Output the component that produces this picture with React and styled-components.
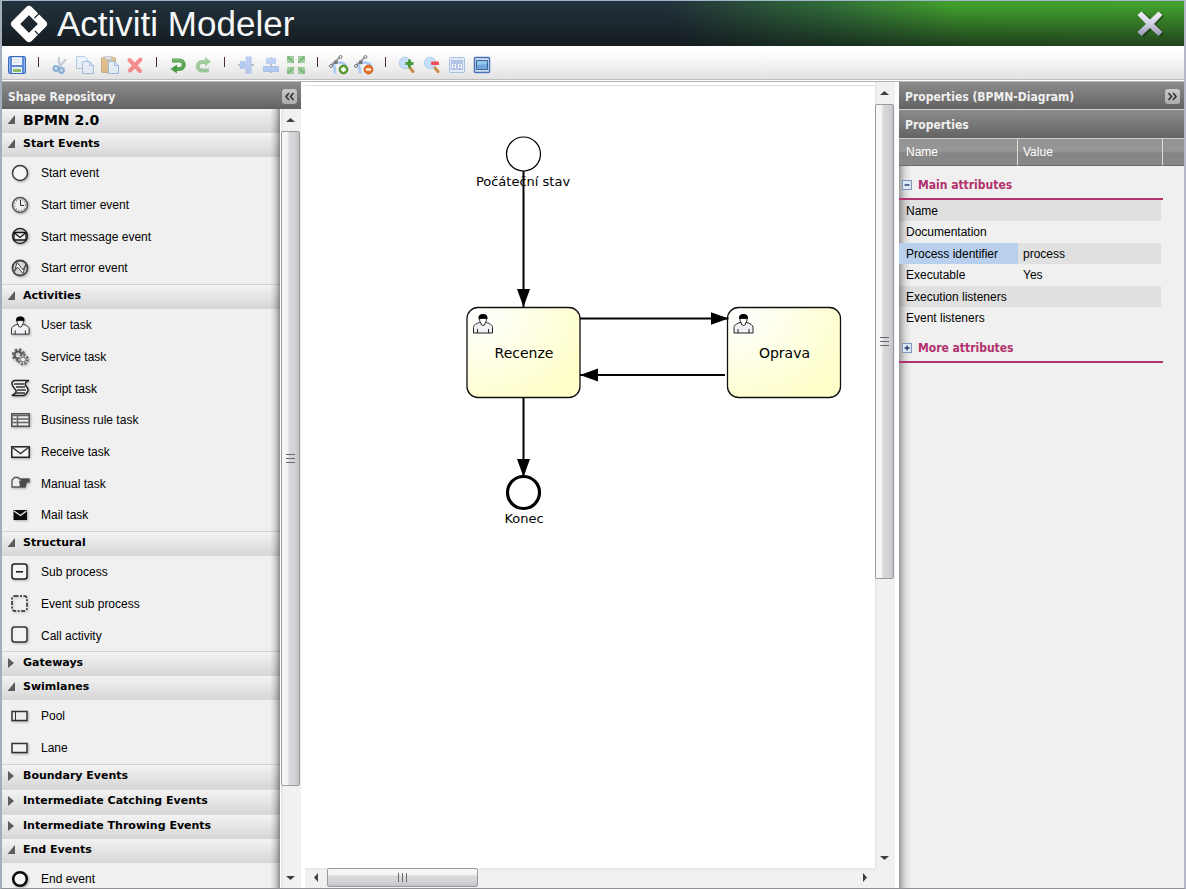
import React, { useState } from "react";
import styled, { createGlobalStyle, css } from "styled-components";

const sans = '"Liberation Sans", Arial, sans-serif';
const wide = '"DejaVu Sans", Verdana, sans-serif';
const condensed = '"DejaVu Sans Condensed", Tahoma, sans-serif';

const GlobalStyle = createGlobalStyle`
  *, *::before, *::after { box-sizing: border-box; }
  body { margin: 0; background: #fff; font-family: ${sans}; font-size: 12px; color: #000; }
  button { margin: 0; padding: 0; border: 0; background: none; font: inherit; color: inherit; text-align: left; cursor: pointer; }
  h1, h2, ul { margin: 0; padding: 0; }
  ul { list-style: none; }
  svg { display: block; flex: none; }
`;

const Window = styled.div`
  display: flex;
  flex-direction: column;
  height: 100vh;
  border: 1px solid #8f9194;
  border-top-color: #9fb6cb;
  border-left: 2px solid #a4adb8;
  border-right: 2px solid #b4b8c8;
  overflow: hidden;
`;

const Header = styled.header`
  display: flex;
  align-items: center;
  justify-content: space-between;
  flex: none;
  height: 45px;
  padding: 0 19px 0 7px;
  background:
    linear-gradient(rgba(14, 18, 20, 0) 10%, rgba(14, 18, 20, 0.66)),
    radial-gradient(ellipse 42% 640% at 98% -60%, #43a02d 0%, #419c2d 44%, #2f6a38 68%, #22303a 100%);
`;

const Brand = styled.div`
  display: flex;
  align-items: center;
  gap: 8px;
`;

const Title = styled.h1`
  font: 400 35px/45px ${sans};
  color: #f4f6f7;
  white-space: nowrap;
`;

const Toolbar = styled.nav`
  display: flex;
  align-items: center;
  flex: none;
  height: 36px;
  padding: 4px 0 2px 2px;
  background: linear-gradient(#fff 6px, #e2e2e2 33px, #bdbdbd 33px, #bdbdbd 34px, #fff 34px, #fff 35px, #b4b4b4 35px);
`;

const ToolButton = styled.button`
  display: flex;
  align-items: center;
  justify-content: center;
  width: 25px;
  height: 25px;
  opacity: ${(p) => (p.$faded ? 0.5 : 1)};
`;

const Separator = styled.span`
  width: 18px;
  height: 16px;
  background: linear-gradient(#4a2b3c, #4a2b3c) center top / 1px 10px no-repeat;
`;

const Workspace = styled.div`
  display: flex;
  flex: 1;
  min-height: 0;
`;

const Sidebar = styled.aside`
  display: flex;
  flex-direction: column;
  flex: none;
  width: 299px;
`;

const PanelBar = styled.header`
  display: flex;
  align-items: center;
  justify-content: space-between;
  flex: none;
  height: ${(p) => (p.$ruled ? 28 : 27)}px;
  padding: 2px 4px 0 6px;
  border-bottom: ${(p) => (p.$ruled ? "1px solid #d0d0d0" : "0")};
  background: linear-gradient(#8c8c8c, #636363);

  & + & { height: 29px; }
`;

const PanelTitle = styled.h2`
  font: 700 12px/16px ${condensed};
  color: #f0f0f0;
  white-space: nowrap;
`;

const CollapseButton = styled.button`
  display: flex;
  align-items: center;
  justify-content: center;
  width: 15px;
  height: 15px;
  border-radius: 3px;
  background: linear-gradient(#c9c9c9, #adadad);
`;

const Repository = styled.div`
  display: flex;
  flex: 1;
  min-height: 0;
`;

const Tree = styled.div`
  position: relative;
  flex: 1;
  overflow: hidden;
  background: #f0f0f0;
  margin-right: 1px;

  &::after {
    content: "";
    position: absolute;
    inset: 0 0 0 auto;
    width: 10px;
    background: linear-gradient(90deg, rgba(0, 0, 0, 0), rgba(0, 0, 0, 0.12) 50%, rgba(0, 0, 0, 0.4));
    pointer-events: none;
  }
`;

const Section = styled.section`
  &[data-open="false"] + &[data-open="false"] {
    border-top: 1px solid #dcdcdc;
  }
`;

const SectionButton = styled.button`
  display: flex;
  align-items: center;
  gap: 7px;
  width: 100%;
  height: 24px;
  padding: 0 0 2px 5px;
  background: linear-gradient(#f3f3f3, #d6d6d6);
  font: 700 ${(p) => (p.$root ? 14 : 11)}px/16px ${wide};
`;

const ShapeList = styled.ul`
  border-bottom: 1px solid #d2d2d2;
`;

const ShapeItem = styled.li`
  display: flex;
  align-items: center;
  gap: 11px;
  height: 32px;
  padding-left: 9px;
  line-height: 16px;

  &:nth-child(3n) {
    height: 31px;
  }

  svg {
    filter: drop-shadow(1px 1px 1px rgba(0, 0, 0, 0.28));
  }
`;

const Bar = styled.div`
  display: flex;
  flex: none;
  flex-direction: ${(p) => (p.$horizontal ? "row" : "column")};
  ${(p) =>
    p.$horizontal
      ? css`height: 20px; background: linear-gradient(#e4e4e4, #f1f1f1 3px);`
      : css`width: 20px; background: linear-gradient(90deg, #e4e4e4, #f1f1f1 3px);`}
`;

const BarArrow = styled.button`
  display: flex;
  align-items: center;
  justify-content: center;
  flex: none;
  width: ${(p) => (p.$horizontal ? 22 : 18)}px;
  height: ${(p) => (p.$horizontal ? 18 : 22)}px;
`;

const Space = styled.div`
  flex: ${(p) => p.$share} 1 0;
`;

const Thumb = styled.div`
  display: flex;
  align-items: center;
  justify-content: center;
  flex: ${(p) => p.$share} 1 0;
  margin: ${(p) => (p.$horizontal ? "0 0 1px" : "0 1px 0 0")};
  border: 1px solid #999b9e;
  border-radius: 2px;
  background: linear-gradient(${(p) => (p.$horizontal ? "180deg" : "90deg")}, #f6f6f6 0 30%, #d7d8da 45%, #d2d3d6 75%, #c2c3c7);
`;

const Canvas = styled.main`
  display: flex;
  flex: 1;
  min-width: 0;
  padding: 0 4px 0 4px;
  background: #fff;
`;

const CanvasColumn = styled.div`
  display: flex;
  flex-direction: column;
  flex: 1;
  min-width: 0;
`;

const Drawing = styled.div`
  flex: 1;
  min-height: 0;
  margin-top: 3px;
  border-top: 1px solid #dedede;
  overflow: hidden;
`;

const BarColumn = styled.div`
  display: flex;
  flex-direction: column;
  width: 20px;
  background: #f0f0f0;
  & > div { flex: 1; margin-bottom: 20px; }
`;

const DiagramText = styled.text`
  font: 400 ${(p) => (p.$task ? 14 : 13)}px ${wide};
  text-anchor: middle;
`;

const Properties = styled.aside`
  display: flex;
  flex-direction: column;
  flex: none;
  width: 285px;
  background:
    linear-gradient(90deg, rgba(0, 0, 0, 0.36), rgba(0, 0, 0, 0.1) 6px, rgba(0, 0, 0, 0) 12px),
    #f0f0f0;
`;

const PropertyTable = styled.table`
  width: 100%;
  table-layout: fixed;
  border-collapse: separate;
  border-spacing: 0;
`;

const ColumnHead = styled.th`
  height: 27px;
  width: ${(p) => p.$width};
  padding: 0 0 0 ${(p) => (p.$first ? 7 : 5)}px;
  border-right: ${(p) => (p.$last ? "0" : "1px solid #dcdcdc")};
  border-bottom: 1px solid #6a6a6a;
  background: linear-gradient(#929292, #979797 45%, #858585 55%, #888);
  color: #fff;
  font-weight: 400;
  text-align: left;
`;

const GroupCell = styled.th`
  height: 34px;
  padding: 6px 0 0 3px;
  border-bottom: 2px solid #b2346e;
  text-align: left;
`;

const GroupButton = styled.button`
  display: flex;
  align-items: center;
  gap: 6px;
  font: 700 12px/16px ${condensed};
  color: #b2306c;
`;

const PropertyRow = styled.tr`
  & > * {
    height: 21px;
    padding: 0 0 0 5px;
    font-weight: 400;
    text-align: left;
    line-height: 16px;
    background-clip: padding-box;
  }
  & > th { padding-left: 7px; }
  & > td { border-right: 2px solid transparent; }
  &:nth-child(odd) > * { height: 22px; }
  &:nth-child(even) > * { background-color: rgba(0, 0, 0, 0.065); }
  &[aria-selected="true"] > th { background-color: #b8cfee; }
`;

/* ---------- icons ---------- */

const Svg = ({ size = 18, children, ...rest }) => (
  <svg width={size} height={size} viewBox={`0 0 ${size} ${size}`} fill="none" aria-hidden="true" {...rest}>
    {children}
  </svg>
);

const Logo = () => (
  <Svg size={40}>
    <path d="M20 5.800 34.200 20 20 34.200 5.800 20Z" stroke="#fff" strokeWidth="7.600" strokeLinejoin="round" />
    <path d="m25.500 14 4.500-4.500M26 27l4.500 4.500" stroke="#1a252b" strokeWidth="1.100" />
  </Svg>
);

const CloseIcon = () => (
  <Svg size={30}>
    <defs>
      <linearGradient id="steel" x1="0" y1="0" x2="0" y2="1">
        <stop offset="0" stopColor="#f5f4fb" />
        <stop offset=".5" stopColor="#cfcee2" />
        <stop offset="1" stopColor="#9797b2" />
      </linearGradient>
    </defs>
    <path d="m4 7 4-4 9 7.500 8-7.500 4 4-8 8.500 8 8.500-4 4-8-8-8 8-4-4 8-8.500Z" fill="#0d250a" opacity=".5" />
    <path d="m2.500 6 4-3.500 8.500 8 8.500-8 4 3.500-8.500 9 8.500 8-4 4-8.500-8-8.500 8-4-4 8.500-8Z" fill="url(#steel)" />
  </Svg>
);

const tools = {
  save: (
    <Svg>
      <rect x=".5" y=".5" width="17" height="17" rx="1.500" fill="#5b8ad6" stroke="#3c6cc0" />
      <path d="M1.500 1.500v15M16.500 1.500v15" stroke="#8fb4ea" />
      <rect x="4" y="1" width="10" height="8" fill="#f4f8fc" />
      <path d="M4 1.500h10M5 4h8M5 6.500h8" stroke="#cbd9ec" />
      <rect x="4" y="11" width="10" height="6" fill="#e9eef2" />
      <rect x="5" y="13" width="8" height="3" fill="#8cbc6c" />
    </Svg>
  ),
  cut: (
    <Svg>
      <path d="M8 1c-1 3 0 6 2 10M15 3c-2 3-5 6-8 9" stroke="#8fa3ba" strokeWidth="2" />
      <circle cx="5" cy="12.500" r="2.300" stroke="#2e75c0" strokeWidth="2.300" />
      <circle cx="10.500" cy="14.500" r="2.300" stroke="#2e75c0" strokeWidth="2.300" />
    </Svg>
  ),
  copy: (
    <Svg>
      <path d="M.5.500h8l3 3v9H.5Z" fill="#e4eefb" stroke="#6c9ee0" />
      <path d="M6.500 5.500h7l4 4v8h-11Z" fill="#dce9fa" stroke="#5c8fd6" />
      <path d="M13.500 5.500v4h4" stroke="#5c8fd6" />
    </Svg>
  ),
  paste: (
    <Svg>
      <rect x=".5" y="1.500" width="14" height="15" rx="1.500" fill="#d08a24" stroke="#a86a14" />
      <rect x="4" y="0" width="7" height="4" rx="1" fill="#c9c9c9" stroke="#808080" />
      <path d="M7.500 5.500h6l4 4v8h-10Z" fill="#e0ebfa" stroke="#4f84d0" />
      <path d="M13.500 5.500v4h4" stroke="#4f84d0" />
    </Svg>
  ),
  remove: (
    <Svg>
      <path d="m3.500 4 10.500 11M14.500 3.500 4 14.500" stroke="#f42a2a" strokeWidth="4" strokeLinecap="round" />
    </Svg>
  ),
  undo: (
    <Svg>
      <path d="M3 4.500h7.500a4 4 0 0 1 0 8.500H6" stroke="#57a350" strokeWidth="4" />
      <path d="M3.500 4H11a4 4 0 0 1 3 2.500" stroke="#8fca85" strokeWidth="1" />
      <path d="M8 8.500v9L1.500 13Z" fill="#4b9a45" />
    </Svg>
  ),
  redo: (
    <Svg>
      <path d="M15 14.500H8.500A4 4 0 0 1 7.500 6H12" stroke="#4fa54c" strokeWidth="4" />
      <path d="M11 1v9.500l6-5Z" fill="#4fa54c" />
    </Svg>
  ),
  alignVertical: (
    <Svg>
      <path d="M1 9h16" stroke="#333" />
      <rect x="3" y="5" width="5" height="8" fill="#76a4f0" />
      <rect x="9" y="1" width="5" height="16" fill="#86aef4" stroke="#6c97e4" />
    </Svg>
  ),
  alignHorizontal: (
    <Svg>
      <path d="M9 1v16" stroke="#333" />
      <rect x="4" y="2" width="10" height="6" fill="#86aef4" />
      <rect x="1.500" y="10.500" width="15" height="5" fill="#76a4f0" stroke="#6c97e4" />
    </Svg>
  ),
  sameSize: (
    <Svg size={20}>
      {[[1, 1, 0], [12, 1, 1], [12, 12, 2], [1, 12, 3]].map(([x, y, r]) => (
        <g key={r} transform={`translate(${x} ${y})`} opacity=".85">
          <path d="M0 0h7v7H0Z" fill="#94c990" />
          <path d="M0 0h4L0 4ZM7 7H4l3-3Z" fill="#6fb46c" transform={`rotate(${r * 90} 3.500 3.500)`} />
          <path d="m2 2 3 3" stroke="#5aa05a" strokeWidth="1.500" transform={`rotate(${r * 90} 3.500 3.500)`} />
        </g>
      ))}
    </Svg>
  ),
};

const Docker = ({ add }) => (
  <Svg size={20}>
    <path d="M6 18.500C6 11 4 8 2.500 8M5.500 8.500c5-2 10-1 12 3" stroke="#a8c9f3" strokeWidth="2.600" />
    <path d="M2 11 11 2" stroke="#8a8a8a" strokeWidth="1.500" />
    <circle cx="2" cy="11" r="1.500" fill="#eee" stroke="#777" />
    <circle cx="11.500" cy="2" r="1.500" fill="#eee" stroke="#777" />
    <path d="M5 5.500h3.500V9H5Z" fill="#777" />
    <circle cx="14.500" cy="14.500" r="4.300" fill={add ? "#66a53a" : "#f0762b"} stroke={add ? "#3f7a1e" : "#c04f0f"} />
    <path d={add ? "M12 14.500h5M14.500 12v5" : "M12 14.500h5"} stroke="#fff" strokeWidth="2" />
  </Svg>
);

const Magnifier = ({ add }) => (
  <Svg>
    <circle cx="7" cy="7" r="5.800" fill="#c5def8" stroke="#b4cfea" />
    <path d="m12 12 3 3.500" stroke="#c98f4d" strokeWidth="3.200" strokeLinecap="round" />
    {add ? (
      <path d="M7.500 7.500h8M11.500 3.500v8" stroke="#489a36" strokeWidth="3" />
    ) : (
      <rect x="8" y="5.500" width="8" height="3.500" rx="1" fill="#ef4a50" />
    )}
  </Svg>
);

const ViewIcon = ({ fit }) => (
  <Svg>
    <rect x="1.500" y="1.500" width="15" height="15" rx="1" fill={fit ? "#cfe0f5" : "#e3ebf8"} stroke={fit ? "#4a73b5" : "#a9bde0"} strokeWidth={fit ? 1.5 : 1} />
    <rect x="3" y="4" width="12" height="10" fill={fit ? "#6fa9df" : "#afc4e6"} />
    {fit ? (
      <path d="M3 4h12v4L3 9Z" fill="#8fc8ec" />
    ) : (
      <>
        <path d="M4 8h4v4H4ZM10 8h4v4h-4Z" fill="#fff" />
        <path d="M6 8.500v3M12 8.500v3" stroke="#6c86b8" />
      </>
    )}
    {fit && <path d="M3.500 4.500h11v9h-11Z" stroke="#3f6193" />}
  </Svg>
);

const Person = () => (
  <>
    <path d="M.5 19.500V14c0-2.500 3-4 6-5h7c3 1 6 2.500 6 5v5.500Z" fill="#f0f1f4" stroke="#222" />
    <path d="M4.500 15.500v4M15.500 15.500v4" stroke="#222" />
    <path d="M6.500 5c0 3 1 4 1.500 4.500V11l2 1 2-1V9.500c.5-.5 1.500-1.500 1.500-4.500Z" fill="#fff" stroke="#222" />
    <path d="M5.500 5.500C5 2 7 .500 10 .500s5 1.500 4.500 5C12 4 8.500 4.500 5.500 5.500Z" fill="#000" />
  </>
);

const ink = "#3a3a3a";
const shapes = {
  start: <circle cx="9" cy="9" r="7.500" stroke={ink} strokeWidth="1.500" fill="#f6f6f6" />,
  timer: (
    <>
      <circle cx="9" cy="9" r="7.500" stroke="#555" strokeWidth="1.500" fill="#ddd" />
      <circle cx="9" cy="9" r="5.500" stroke="#8a8a8a" strokeDasharray="1 2" strokeWidth="1.500" fill="#f0f0f0" />
      <path d="M9.500 4v5.500H13" stroke="#333" />
    </>
  ),
  message: (
    <>
      <circle cx="9" cy="9" r="7.500" stroke="#333" strokeWidth="1.500" fill="#ccc" />
      <path d="M3 5.500h12v7.500H3Z" fill="#eee" stroke="#111" strokeWidth="1.300" />
      <path d="m3.500 6 5.500 4.500L14.500 6" stroke="#111" strokeWidth="1.300" />
    </>
  ),
  error: (
    <>
      <circle cx="9" cy="9" r="7.500" stroke="#444" strokeWidth="1.800" fill="#d6d6d6" />
      <path d="M3.500 12.500 6 3.500l6 7.500 3-6-3 9.500L6.500 8Z" fill="#fff" stroke="#444" strokeWidth="1" />
    </>
  ),
  user: <g transform="scale(.93)"><Person /></g>,
  service: (
    <>
      <circle cx="7.500" cy="7" r="5" stroke="#666" strokeWidth="3.500" strokeDasharray="2.200 1.700" />
      <circle cx="7" cy="7" r="3.500" stroke="#555" strokeWidth="2" />
      <circle cx="12" cy="11.500" r="4.500" fill="#ddd" stroke="#666" strokeWidth="2.500" strokeDasharray="2 1.500" />
      <circle cx="12" cy="11.500" r="2.500" fill="#f2f2f2" stroke="#666" />
    </>
  ),
  script: (
    <>
      <path d="M4 1.500h14c-3 1-5 3-3 5.500s3 4 1 6.500c-1 2-2 3-4 3H1c2-1 5-3 4-5S0 6 1 3.500c.5-1 1.500-2 3-2Z" fill="#eee" stroke="#222" strokeWidth="1.500" />
      <path d="M3 5h10M5 8h9M6 11h9M4 14h10" stroke="#333" strokeWidth="1.300" />
    </>
  ),
  rule: (
    <>
      <rect x=".8" y="2.800" width="17.400" height="12.500" fill="#eee" stroke="#555" strokeWidth="1.600" />
      <path d="M1 4.500h17M1 8h17M1 11.500h17M6.500 4v11" stroke="#666" strokeWidth="1.500" />
    </>
  ),
  receive: (
    <>
      <rect x=".8" y="3.800" width="17.400" height="10.500" fill="#f4f4f4" stroke="#222" strokeWidth="1.500" />
      <path d="m1.500 4.500 8 6 8-6" stroke="#333" strokeWidth="1.400" />
    </>
  ),
  manual: (
    <>
      <path d="M1 13V6l2.500-2.500H7L8.500 5H18v3h-3l-1 5Z" fill="#eee" stroke="#555" strokeWidth="1.300" />
      <path d="M8 6.500h2V5h8.500v2.500H16L14.500 13H9Z" fill="#4a4a4a" />
    </>
  ),
  mail: (
    <>
      <rect x="2.500" y="4" width="13.500" height="10" fill="#0c0c0c" />
      <path d="m3 5 6.500 4.500L15.500 5" stroke="#eee" strokeWidth="1.300" />
    </>
  ),
  sub: (
    <>
      <rect x="1" y="1" width="15" height="15" rx="2.500" stroke="#222" strokeWidth="1.500" fill="#f4f4f4" />
      <path d="M5 8.800h7" stroke="#111" strokeWidth="1.500" />
    </>
  ),
  eventSub: <rect x="1" y="1" width="15" height="15" rx="2.500" stroke="#222" strokeWidth="1.500" strokeDasharray="4 1.500 2 1.500" />,
  call: <rect x="1" y="1" width="15" height="15" rx="2.500" stroke="#333" strokeWidth="1.500" fill="#f4f4f4" />,
  pool: (
    <>
      <rect x="1" y="4.500" width="15" height="9" stroke="#333" strokeWidth="1.500" fill="#eee" />
      <path d="M4.500 4.500v9" stroke="#333" />
    </>
  ),
  lane: <rect x="1" y="4.500" width="15" height="9" stroke="#333" strokeWidth="1.500" fill="#f2f2f2" />,
  end: <circle cx="9" cy="9" r="6.800" stroke="#0c0c0c" strokeWidth="2.600" fill="#f6f6f6" />,
};

const ShapeIcon = ({ name }) => (
  <svg width="19" height="19" viewBox="0 0 19 19" fill="none" aria-hidden="true">{shapes[name]}</svg>
);

const Disclosure = ({ open }) => (
  <svg width="9" height="10" viewBox="0 0 9 10" aria-hidden="true">
    <path d={open ? "M8 0v9H.5Z" : "M1 0v10l6-5Z"} fill="#5c5c5c" />
  </svg>
);

const Chevrons = ({ flip }) => (
  <Svg size={11} transform={flip ? "scale(-1 1)" : undefined}>
    <path d="M5 2 2 5.500 5 9M9.500 2l-3 3.500 3 3.500" stroke="#333" strokeWidth="1.600" />
  </Svg>
);

const ToggleIcon = ({ open }) => (
  <Svg size={10}>
    <rect x=".5" y=".5" width="9" height="9" fill="#dce8f6" stroke="#7d95b8" />
    <path d={open ? "M2.500 5h5" : "M2.500 5h5M5 2.500v5"} stroke="#223a66" strokeWidth="1.400" />
  </Svg>
);

const arrowPaths = { up: "M0 6h9L4.500 2Z", down: "M0 3h9L4.500 7Z", left: "M6 0v9L2 4.500Z", right: "M3 0v9l4-4.500Z" };
const Arrow = ({ to }) => (
  <Svg size={9}><path d={arrowPaths[to]} fill="#3f3f3f" /></Svg>
);

/* ---------- parts ---------- */

function ScrollBar({ horizontal, thumb, after, label }) {
  return (
    <Bar $horizontal={horizontal} role="group" aria-label={label}>
      <BarArrow $horizontal={horizontal} aria-label="Scroll back"><Arrow to={horizontal ? "left" : "up"} /></BarArrow>
      <Thumb $horizontal={horizontal} $share={thumb}>
        <Svg size={9} transform={horizontal ? "rotate(90)" : undefined}>
          <path d="M0 .500h9M0 4.500h9M0 8.500h9" stroke="#66686c" />
        </Svg>
      </Thumb>
      <Space $share={after} />
      <BarArrow $horizontal={horizontal} aria-label="Scroll forward"><Arrow to={horizontal ? "right" : "down"} /></BarArrow>
    </Bar>
  );
}

const groups = [
  { title: "Start Events", open: true, items: [["start", "Start event"], ["timer", "Start timer event"], ["message", "Start message event"], ["error", "Start error event"]] },
  { title: "Activities", open: true, items: [["user", "User task"], ["service", "Service task"], ["script", "Script task"], ["rule", "Business rule task"], ["receive", "Receive task"], ["manual", "Manual task"], ["mail", "Mail task"]] },
  { title: "Structural", open: true, items: [["sub", "Sub process"], ["eventSub", "Event sub process"], ["call", "Call activity"]] },
  { title: "Gateways", open: false, items: [] },
  { title: "Swimlanes", open: true, items: [["pool", "Pool"], ["lane", "Lane"]] },
  { title: "Boundary Events", open: false, items: [] },
  { title: "Intermediate Catching Events", open: false, items: [] },
  { title: "Intermediate Throwing Events", open: false, items: [] },
  { title: "End Events", open: true, items: [["end", "End event"]] },
];

function Group({ title, open: initial, items }) {
  const [open, setOpen] = useState(initial);
  return (
    <Section data-open={open}>
      <SectionButton aria-expanded={open} onClick={() => setOpen(!open)}>
        <Disclosure open={open} />
        {title}
      </SectionButton>
      {open && (
        <ShapeList>
          {items.map(([icon, label]) => (
            <ShapeItem key={label}><ShapeIcon name={icon} />{label}</ShapeItem>
          ))}
        </ShapeList>
      )}
    </Section>
  );
}

const toolGroups = [
  [["Save", tools.save]],
  [["Cut", tools.cut, true], ["Copy", tools.copy, true], ["Paste", tools.paste, true], ["Delete", tools.remove, true]],
  [["Undo", tools.undo], ["Redo", tools.redo, true]],
  [["Align vertically", tools.alignVertical, true], ["Align horizontally", tools.alignHorizontal, true], ["Same size", tools.sameSize]],
  [["Add bend-point", <Docker add />], ["Remove bend-point", <Docker />]],
  [["Zoom in", <Magnifier add />], ["Zoom out", <Magnifier />], ["Zoom to standard", <ViewIcon />], ["Zoom to fit", <ViewIcon fit />]],
];

const Task = ({ x, y, label }) => (
  <g transform={`translate(${x} ${y})`}>
    <rect width="113" height="90" rx="11" fill="url(#taskFill)" stroke="#111" strokeWidth="1.300" />
    <g transform="translate(6 6)"><Person /></g>
    <DiagramText $task x="57" y="50">{label}</DiagramText>
  </g>
);

const Flow = ({ d }) => <path d={d} stroke="#000" strokeWidth="2" fill="none" markerEnd="url(#tip)" />;

const Diagram = () => (
  <svg width="570" height="560" viewBox="305 86 570 560" role="img" aria-label="Process diagram">
    <defs>
      <radialGradient id="taskFill" cx="10%" cy="10%" r="100%">
        <stop offset="0" stopColor="#fff" />
        <stop offset="1" stopColor="#ffffcc" />
      </radialGradient>
      <marker id="tip" markerUnits="userSpaceOnUse" markerWidth="18" markerHeight="14" refX="18" refY="7" orient="auto">
        <path d="M0 .500 18 7 0 13.500Z" fill="#000" />
      </marker>
    </defs>
    <circle cx="523.5" cy="154" r="17" fill="#fff" stroke="#000" strokeWidth="1.200" />
    <DiagramText x="523" y="186">Počáteční stav</DiagramText>
    <Task x={467} y={307.5} label="Recenze" />
    <Task x={727.5} y={307.5} label="Oprava" />
    <circle cx="523.5" cy="492.500" r="16" fill="#fff" stroke="#000" strokeWidth="3.200" />
    <DiagramText x="524" y="523">Konec</DiagramText>
    <Flow d="M523.500 171V307" />
    <Flow d="M580 318.500H728.500" />
    <Flow d="M725 375H580" />
    <Flow d="M523.500 398V477" />
  </svg>
);

const attributes = [
  ["Name", ""],
  ["Documentation", ""],
  ["Process identifier", "process"],
  ["Executable", "Yes"],
  ["Execution listeners", ""],
  ["Event listeners", ""],
];

export default function App() {
  return (
    <Window>
      <GlobalStyle />
      <Header>
        <Brand>
          <Logo />
          <Title>Activiti Modeler</Title>
        </Brand>
        <button aria-label="Close"><CloseIcon /></button>
      </Header>

      <Toolbar aria-label="Editor tools">
        {toolGroups.map((group, i) => (
          <React.Fragment key={i}>
            {i > 0 && <Separator />}
            {group.map(([label, icon, faded]) => (
              <ToolButton key={label} aria-label={label} $faded={faded}>{icon}</ToolButton>
            ))}
          </React.Fragment>
        ))}
      </Toolbar>

      <Workspace>
        <Sidebar>
          <PanelBar>
            <PanelTitle>Shape Repository</PanelTitle>
            <CollapseButton aria-label="Collapse shape repository"><Chevrons /></CollapseButton>
          </PanelBar>
          <Repository>
            <Tree>
              <SectionButton $root aria-expanded="true">
                <Disclosure open />
                BPMN 2.0
              </SectionButton>
              {groups.map((g) => <Group key={g.title} {...g} />)}
            </Tree>
            <ScrollBar thumb={655} after={80} label="Shape list scroll bar" />
          </Repository>
        </Sidebar>

        <Canvas>
          <CanvasColumn>
            <Drawing><Diagram /></Drawing>
            <ScrollBar horizontal thumb={149} after={376} label="Horizontal scroll bar" />
          </CanvasColumn>
          <BarColumn>
            <ScrollBar thumb={474} after={268} label="Vertical scroll bar" />
          </BarColumn>
        </Canvas>

        <Properties>
          <PanelBar $ruled>
            <PanelTitle>Properties (BPMN-Diagram)</PanelTitle>
            <CollapseButton aria-label="Collapse properties"><Chevrons flip /></CollapseButton>
          </PanelBar>
          <PanelBar $ruled>
            <PanelTitle>Properties</PanelTitle>
          </PanelBar>
          <PropertyTable>
            <thead>
              <tr>
                <ColumnHead $first $width="119px" scope="col">Name</ColumnHead>
                <ColumnHead $width="145px" scope="col">Value</ColumnHead>
                <ColumnHead $last $width="auto" aria-hidden="true" />
              </tr>
            </thead>
            <tbody>
              <tr>
                <GroupCell colSpan={2} scope="rowgroup">
                  <GroupButton aria-expanded="true"><ToggleIcon open />Main attributes</GroupButton>
                </GroupCell>
              </tr>
              {attributes.map(([name, value]) => (
                <PropertyRow key={name} aria-selected={name === "Process identifier"}>
                  <th scope="row">{name}</th>
                  <td>{value}</td>
                </PropertyRow>
              ))}
            </tbody>
            <tbody>
              <tr>
                <GroupCell colSpan={2} scope="rowgroup">
                  <GroupButton aria-expanded="false"><ToggleIcon />More attributes</GroupButton>
                </GroupCell>
              </tr>
            </tbody>
          </PropertyTable>
        </Properties>
      </Workspace>
    </Window>
  );
}
